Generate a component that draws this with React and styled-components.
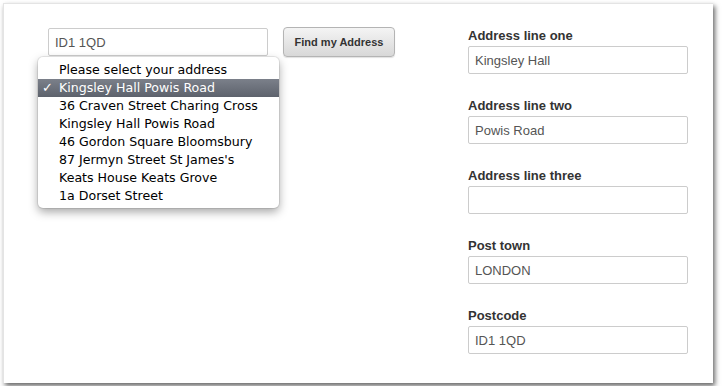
import React from 'react'
import styled, { createGlobalStyle } from 'styled-components'

const GlobalStyle = createGlobalStyle`
  html, body { margin: 0; padding: 0; background: #ffffff; }
  body { font-family: "Liberation Sans", Arial, sans-serif; }
`

const addresses = [
  'Kingsley Hall Powis Road',
  '36 Craven Street Charing Cross',
  'Kingsley Hall Powis Road',
  '46 Gordon Square Bloomsbury',
  "87 Jermyn Street St James's",
  'Keats House Keats Grove',
  '1a Dorset Street',
]

const fields = [
  { label: 'Address line one', value: 'Kingsley Hall' },
  { label: 'Address line two', value: 'Powis Road' },
  { label: 'Address line three', value: '' },
  { label: 'Post town', value: 'LONDON' },
  { label: 'Postcode', value: 'ID1 1QD' },
]

function App() {
  return (
    <>
      <GlobalStyle />
      <Card>
        <LeftCol>
          <SearchRow>
            <InputWrap>
              <TextInput readOnly value="ID1 1QD" />
              <Menu>
                <MenuItem>Please select your address</MenuItem>
                {addresses.map((a, i) => (
                  <MenuItem key={i} selected={i === 0}>
                    {i === 0 && <Check>✓</Check>}
                    {a}
                  </MenuItem>
                ))}
              </Menu>
            </InputWrap>
            <Button>Find my Address</Button>
          </SearchRow>
        </LeftCol>
        <RightCol>
          {fields.map((f) => (
            <Field key={f.label}>
              <Label>{f.label}</Label>
              <TextInput readOnly value={f.value} />
            </Field>
          ))}
        </RightCol>
      </Card>
    </>
  )
}

export default App

const Card = styled.div`
  margin: 3px;
  width: 710px;
  height: 380px;
  box-sizing: border-box;
  background: #fff;
  border-top: 1px solid #e4e4e4;
  border-left: 1px solid #e4e4e4;
  box-shadow: 2px 3px 5px rgba(0, 0, 0, 0.6);
  display: flex;
  padding: 24px 0 0 44px;
`

const LeftCol = styled.div`
  width: 420px;
`

const SearchRow = styled.div`
  display: flex;
  align-items: flex-start;
  gap: 15px;
`

const InputWrap = styled.div`
  position: relative;
`

const TextInput = styled.input`
  display: block;
  width: 220px;
  height: 28px;
  box-sizing: border-box;
  border: 1px solid #cccccc;
  border-radius: 2px;
  padding: 0 6px;
  font-family: "Liberation Sans", Arial, sans-serif;
  font-size: 13px;
  color: #555;
  outline: none;
  background: #fff;
`

const Menu = styled.div`
  position: absolute;
  left: -10px;
  top: 29px;
  width: 241px;
  box-sizing: border-box;
  padding: 4px 0 3px;
  background: #fff;
  border-radius: 5px;
  box-shadow: 0 4px 10px rgba(0, 0, 0, 0.35), 0 0 0 1px rgba(0, 0, 0, 0.08);
  z-index: 2;
`

const MenuItem = styled.div`
  position: relative;
  height: 18px;
  line-height: 18px;
  padding-left: 21px;
  font-family: "DejaVu Sans", "Lucida Grande", sans-serif;
  font-size: 12.6px;
  color: ${(p) => (p.selected ? '#fff' : '#000')};
  background: ${(p) =>
    p.selected ? 'linear-gradient(#7b808a, #5d626c)' : 'transparent'};
  white-space: nowrap;
`

const Check = styled.span`
  position: absolute;
  left: 4px;
  top: 0;
  font-weight: bold;
  font-size: 13px;
`

const Button = styled.button`
  width: 112px;
  height: 30px;
  margin-top: -1px;
  border: 1px solid #b4b4b4;
  border-radius: 4px;
  background: linear-gradient(#f4f4f4, #d8d8d8);
  box-shadow: 0 1px 1px rgba(0, 0, 0, 0.12);
  font-family: "Liberation Sans", Arial, sans-serif;
  font-weight: bold;
  font-size: 11px;
  color: #333;
  padding: 0;
`

const RightCol = styled.div`
  width: 220px;
  display: flex;
  flex-direction: column;
  gap: 24px;
`

const Field = styled.div`
  display: flex;
  flex-direction: column;
  gap: 2px;
`

const Label = styled.label`
  font-family: "Liberation Sans", Arial, sans-serif;
  font-weight: bold;
  font-size: 13px;
  line-height: 16px;
  color: #333;
`
